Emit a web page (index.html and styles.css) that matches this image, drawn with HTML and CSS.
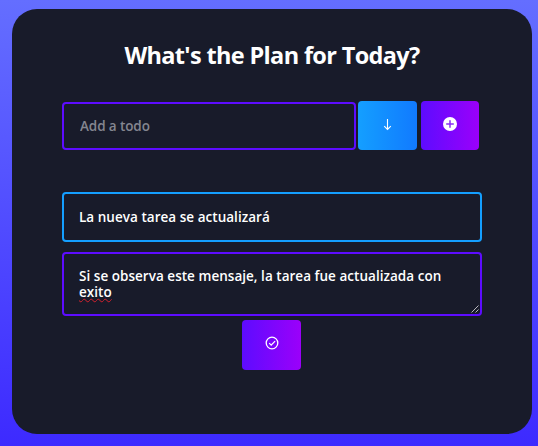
FILE: index.html
```html
<!DOCTYPE html>
<html lang="es">
<head>
<meta charset="utf-8">
<title>Todo</title>
<link rel="stylesheet" href="styles.css">
</head>
<body>
<main class="todo-app">
  <h1><span>What's the Plan for Today?</span></h1>
  <form class="todo-form">
    <input class="todo-input" type="text" placeholder="Add a todo">
    <button class="todo-button toggle" type="button" aria-label="Details">
      <svg width="9" height="12" viewBox="0 0 9 12" fill="none" stroke="currentColor" stroke-width="1.1"><path d="M4.5 0v10.5M1.2 7.2l3.3 3.3 3.3-3.3"/></svg>
    </button>
    <button class="todo-button add" type="button" aria-label="Add">
      <svg width="14" height="14" viewBox="0 0 14 14"><circle cx="7" cy="7" r="7" fill="currentColor"/><path d="M7 3.2v7.6M3.2 7h7.6" stroke="#8a2cf5" stroke-width="1.5"/></svg>
    </button>
  </form>
  <form class="edit-form">
    <div class="field title-field"><span class="title-text">La nueva tarea se actualizará</span></div>
    <div class="field detail-field"><div class="detail-text">Si se observa este mensaje, la tarea fue actualizada con</div><div><span class="misspelled">exito</span></div>
      <svg class="grip" width="8" height="8" viewBox="0 0 8 8" stroke="#b9b9bd" stroke-width="1"><path d="M.5 7.5l7-7M4.5 7.5l3-3"/></svg>
    </div>
    <button class="todo-button add save" type="button" aria-label="Save">
      <svg width="14" height="14" viewBox="0 0 14 14" fill="none" stroke="currentColor" stroke-width="1.3"><circle cx="7" cy="7" r="5.8"/><path d="M4.2 7.1l2 2 3.9-4"/></svg>
    </button>
  </form>
</main>
</body>
</html>
```
FILE: styles.css
```css
* { box-sizing: border-box; margin: 0; padding: 0; }
body {
  height: 446px;
  overflow: hidden;
  font-family: "Trebuchet MS", "Open Sans", sans-serif;
  background: linear-gradient(180deg, #646eff 0%, #3d2aff 100%);
}
.todo-app {
  width: 520px;
  height: 425px;
  margin: 9px 0 0 12px;
  padding: 30px 50px 0;
  border-radius: 25px;
  background: #181b2a;
  color: #fff;
}
h1 {
  height: 32px;
  line-height: 32px;
  font-size: 23.5px;
  font-weight: 700;
  text-align: center;
  white-space: nowrap;
  letter-spacing: -.65px;
}
.todo-form {
  display: flex;
  height: 49px;
  margin-top: 30px;
}
.todo-input {
  width: 294px;
  height: 48px;
  margin: 1px 2px 0 0;
  padding: 0 16px 1px;
  border: 2px solid #5d0cff;
  border-radius: 4px;
  background: transparent;
  color: #fff;
  font: 600 13.5px "Trebuchet MS", "Open Sans", sans-serif;
  letter-spacing: -.1px;
  outline: none;
}
.todo-input::placeholder { color: #848690; opacity: 1; }
.todo-button {
  display: flex;
  justify-content: center;
  padding-top: 16px;
  border: 0;
  border-radius: 4px;
  color: #fff;
}
.toggle {
  width: 59px;
  height: 49px;
  margin-right: 4px;
  padding-top: 18px;
  background: linear-gradient(90deg, #149fff 0%, #117aff 100%);
}
.add {
  width: 58px;
  height: 49px;
  background: linear-gradient(90deg, #5d0cff 0%, #9b00fa 100%);
}
.edit-form {
  display: flex;
  flex-direction: column;
  margin-top: 42px;
}
.field {
  border: 2px solid #5d0cff;
  border-radius: 4px;
  font-size: 13.5px;
  font-weight: 600;
  line-height: 16px;
  padding: 15px;
  white-space: nowrap;
  letter-spacing: .03px;
}
.title-field { height: 50px; border-color: #149fff; }
.detail-field { position: relative; height: 64px; margin-top: 10px; padding-top: 14px; }
.misspelled {
  text-decoration: underline wavy #d3202c 1px;
  text-decoration-skip-ink: none;
  text-underline-offset: 1px;
}
.grip { position: absolute; right: 1px; bottom: 1px; }
.save { align-self: center; width: 59px; height: 50px; margin: 4px 1px 0 0; }
```
